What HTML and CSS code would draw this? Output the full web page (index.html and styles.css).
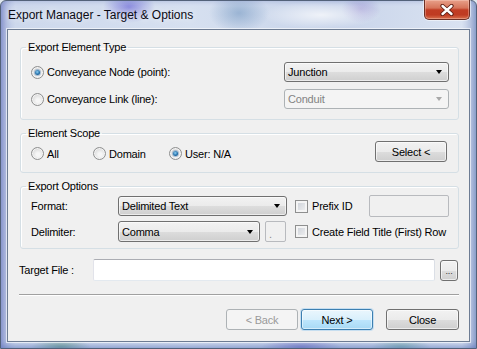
FILE: index.html
```html
<!DOCTYPE html>
<html lang="en">
<head>
<meta charset="UTF-8" />
<title>Export Manager - Target &amp; Options</title>
<link rel="stylesheet" href="styles.css">
</head>
<body>

<div class="window">
  <div class="titlebar">
    <span class="title">Export Manager - Target &amp; Options</span>
    <button class="close-btn" aria-label="Close">
      <svg width="14" height="12" viewBox="0 0 14 12">
        <path d="M2.5 2 L11.5 10 M11.5 2 L2.5 10" stroke="#5b1c12" stroke-width="4.2" stroke-linecap="round" />
        <path d="M2.5 2 L11.5 10 M11.5 2 L2.5 10" stroke="#fff" stroke-width="2.4" stroke-linecap="round" />
      </svg>
    </button>
  </div>

  <div class="client">
    <fieldset class="group group-type">
      <legend>Export Element Type</legend>
      <div class="type-row">
        <label class="opt"><span class="radio on"></span>Conveyance Node (point):</label>
        <div class="combo wide"><span>Junction</span><span class="arrow"></span></div>
      </div>
      <div class="type-row second">
        <label class="opt"><span class="radio"></span>Conveyance Link (line):</label>
        <div class="combo wide disabled"><span>Conduit</span><span class="arrow"></span></div>
      </div>
    </fieldset>

    <fieldset class="group group-scope">
      <legend>Element Scope</legend>
      <div class="scope-row">
        <div class="scope-opts">
          <label class="opt scope-all"><span class="radio"></span>All</label>
          <label class="opt scope-domain"><span class="radio"></span>Domain</label>
          <label class="opt"><span class="radio on"></span>User: N/A</label>
        </div>
        <button class="btn select-btn">Select &lt;</button>
      </div>
    </fieldset>

    <fieldset class="group group-options">
      <legend>Export Options</legend>
      <div class="opt-row">
        <span class="field-label">Format:</span>
        <div class="combo format"><span>Delimited Text</span><span class="arrow"></span></div>
        <label class="opt check-opt"><span class="check"></span>Prefix ID</label>
        <div class="textbox disabled prefix"></div>
      </div>
      <div class="opt-row second">
        <span class="field-label">Delimiter:</span>
        <div class="combo delim"><span>Comma</span><span class="arrow"></span></div>
        <div class="textbox disabled dot">.</div>
        <label class="opt check-opt title-check"><span class="check"></span>Create Field Title (First) Row</label>
      </div>
    </fieldset>

    <div class="target-row">
      <span class="target-label">Target File :</span>
      <div class="textbox target"></div>
      <button class="btn browse">...</button>
    </div>

    <div class="separator"></div>

    <div class="actions">
      <button class="btn disabled" disabled>&lt; Back</button>
      <button class="btn default">Next &gt;</button>
      <button class="btn close">Close</button>
    </div>
  </div>
</div>

</body>
</html>
```

FILE: styles.css
```css
body {
  margin: 0;
  width: 477px;
  height: 349px;
  overflow: hidden;
  background: #dfe7ee;
  font-family: 'Liberation Sans', Arial, sans-serif;
  font-size: 11px;
  letter-spacing: -0.2px;
  color: #000;
}

/* glass frame */
.window {
  box-sizing: border-box;
  height: 349px;
  display: flex;
  flex-direction: column;
  padding: 0 6px 6px 6px;
  border: 1px solid #53627a;
  border-radius: 6px 6px 0 0;
  background:
    radial-gradient(ellipse 26px 16px at 128px 6px, rgba(92, 86, 210, 0.6), transparent),
    radial-gradient(ellipse 30px 20px at 238px 12px, rgba(100, 140, 185, 0.5), transparent),
    radial-gradient(ellipse 60px 14px at 320px 14px, rgba(255, 255, 255, 0.7), transparent),
    radial-gradient(ellipse 20px 14px at 360px 8px, rgba(140, 120, 200, 0.4), transparent),
    radial-gradient(ellipse 30px 8px at 60px 346px, rgba(80, 150, 110, 0.6), transparent),
    radial-gradient(ellipse 40px 8px at 300px 346px, rgba(100, 90, 190, 0.55), transparent),
    radial-gradient(ellipse 30px 8px at 400px 346px, rgba(80, 160, 140, 0.5), transparent),
    linear-gradient(90deg, #aebbdf 0%, #cdd8ec 3%, #d6e0f0 40%, #c8d4ea 70%, #d9e2f1 97%, #aab8d8 100%);
  box-shadow:
    inset 5px 0 6px -2px rgba(80, 90, 180, 0.35),
    inset -5px 0 6px -2px rgba(80, 110, 180, 0.3),
    inset 0 -5px 6px -2px rgba(70, 100, 180, 0.4);
}
.titlebar {
  height: 28px;
  display: flex;
  justify-content: space-between;
  align-items: flex-start;
}
.title {
  padding: 7px 0 0 1px;
  font-size: 12px;
  line-height: 14px;
  letter-spacing: 0;
  color: #0b0b14;
  text-shadow: 0 0 6px rgba(255, 255, 255, 0.9);
}
.close-btn {
  width: 46px;
  height: 20px;
  margin-top: -1px;
  padding: 0;
  display: flex;
  align-items: center;
  justify-content: center;
  border: 1px solid #6c2f25;
  border-top: none;
  border-radius: 0 0 5px 5px;
  background: linear-gradient(#e8a08a 0%, #d6745a 42%, #c13d24 52%, #bf3b22 78%, #d9704e 100%);
  box-shadow: inset 0 0 0 1px rgba(255, 220, 210, 0.35), 0 0 0 1px rgba(255, 255, 255, 0.5);
}

.client {
  flex: 1;
  display: flex;
  flex-direction: column;
  padding: 10px 10px 0 11px;
  background: #f0f0f0;
  border: 1px solid #6d7c93;
  box-shadow: 0 0 0 1px rgba(255, 255, 255, 0.6);
}

/* group boxes */
.group {
  margin: 0 0 0 1px;
  border: 1px solid #d5dfe5;
  border-radius: 3px;
  box-shadow: inset 1px 1px 0 #fff;
  min-width: 0;
}
.group legend {
  padding: 0 2px;
  margin-left: -5px;
  line-height: 14px;
}
.group-type { padding: 8px 9px 10px 10px; }
.group-scope { padding: 1px 9px 10px 10px; margin-top: 6px; }
.group-options { padding: 2px 9px 6px 10px; margin-top: 6px; }

.type-row {
  display: flex;
  justify-content: space-between;
  align-items: center;
}
.type-row.second { margin-top: 7px; }

.opt {
  display: flex;
  align-items: center;
  gap: 3px;
  white-space: nowrap;
}

/* radio buttons */
.radio {
  box-sizing: border-box;
  width: 13px;
  height: 13px;
  display: flex;
  align-items: center;
  justify-content: center;
  border: 1px solid #8e8f8f;
  border-radius: 50%;
  background: radial-gradient(circle at 55% 60%, #f6f6f6 20%, #d8d8d8 75%, #eeeeee);
  box-shadow: inset 0 0 0 1px #f4f4f4;
}
.radio.on::after {
  content: '';
  width: 5px;
  height: 5px;
  border-radius: 50%;
  background: radial-gradient(circle at 45% 40%, #8fd0f5, #1d6aa5 60%, #0d3e6b);
  box-shadow: 0 0 0 1px rgba(60, 110, 160, 0.4);
}

/* check boxes */
.check {
  box-sizing: border-box;
  width: 13px;
  height: 13px;
  border: 1px solid #8e8f8f;
  background: linear-gradient(135deg, #c9ced6, #f3f3f3);
  box-shadow: inset 0 0 0 2px #f4f4f4;
}

/* combo boxes and buttons */
.combo {
  box-sizing: border-box;
  height: 20px;
  display: flex;
  align-items: center;
  justify-content: space-between;
  padding: 0 6px 0 3px;
  border: 1px solid #707070;
  border-radius: 3px;
  background: linear-gradient(#f2f2f2 0%, #ebebeb 50%, #dddddd 51%, #cfcfcf 100%);
  box-shadow: inset 0 0 0 1px rgba(255, 255, 255, 0.6);
  white-space: nowrap;
}
.combo .arrow {
  width: 0;
  height: 0;
  border-left: 3.5px solid transparent;
  border-right: 3.5px solid transparent;
  border-top: 4px solid #000;
}
.combo.disabled {
  border-color: #adb2b5;
  background: #f4f4f4;
  color: #838383;
  box-shadow: none;
}
.combo.disabled .arrow { border-top-color: #a8a8a8; }
.combo.wide { width: 165px; }
.combo.format { width: 169px; }
.combo.delim { width: 142px; height: 21px; }

.btn {
  box-sizing: border-box;
  width: 72px;
  height: 21px;
  padding: 0;
  font: inherit;
  letter-spacing: inherit;
  color: #000;
  border: 1px solid #707070;
  border-radius: 3px;
  background: linear-gradient(#f2f2f2 0%, #ebebeb 50%, #dddddd 51%, #cfcfcf 100%);
  box-shadow: inset 0 0 0 1px rgba(255, 255, 255, 0.6);
}
.btn.default {
  border-color: #3c7fb1;
  background: linear-gradient(#eaf6fd 0%, #d9f0fc 50%, #bee6fd 51%, #a7d9f5 100%);
  box-shadow: inset 0 0 0 1px rgba(255, 255, 255, 0.5), 0 0 0 1px rgba(120, 190, 240, 0.35);
}
.btn.disabled {
  border-color: #adb2b5;
  background: #f4f4f4;
  color: #9a9a9a;
  box-shadow: none;
}

/* text boxes */
.textbox {
  box-sizing: border-box;
  height: 22px;
  border: 1px solid;
  border-color: #abadb3 #dbdfe6 #e3e9ef #e2e3ea;
  border-radius: 2px;
  background: #fff;
}
.textbox.disabled {
  border-color: #b8babe;
  background: #f0f0f0;
  color: #8a8a8a;
}

/* scope row */
.scope-row {
  display: flex;
  justify-content: space-between;
  align-items: center;
}
.scope-opts {
  display: flex;
  margin-top: 4px;
}
.scope-all { width: 62px; }
.scope-domain { width: 76px; }
.select-btn { margin-right: 2px; }

/* export options */
.opt-row {
  display: flex;
  align-items: center;
  height: 22px;
}
.opt-row.second {
  height: 21px;
  margin-top: 4px;
}
.field-label {
  width: 87px;
}
.check-opt {
  margin-left: 8px;
  gap: 4px;
}
.title-check { margin-left: 9px; }
.prefix {
  width: 80px;
  margin-left: auto;
}
.dot {
  width: 21px;
  height: 21px;
  margin-left: 5px;
  padding: 6px 0 0 3px;
}

/* target file */
.target-row {
  display: flex;
  align-items: center;
  margin-top: 10px;
}
.target-label {
  width: 74px;
}
.target {
  width: 342px;
}
.btn.browse {
  width: 18px;
  margin-left: 5px;
  display: flex;
  align-items: flex-end;
  justify-content: center;
  padding-bottom: 4px;
  font-size: 9px;
  line-height: 9px;
  color: #333;
}

.separator {
  margin-top: 13px;
  border-top: 1px solid #a0a0a0;
  border-bottom: 1px solid #fff;
}

.actions {
  display: flex;
  justify-content: flex-end;
  margin-top: 13px;
}
.actions .default { margin-left: 3px; }
.actions .close { margin-left: 13px; width: 73px; }
```
